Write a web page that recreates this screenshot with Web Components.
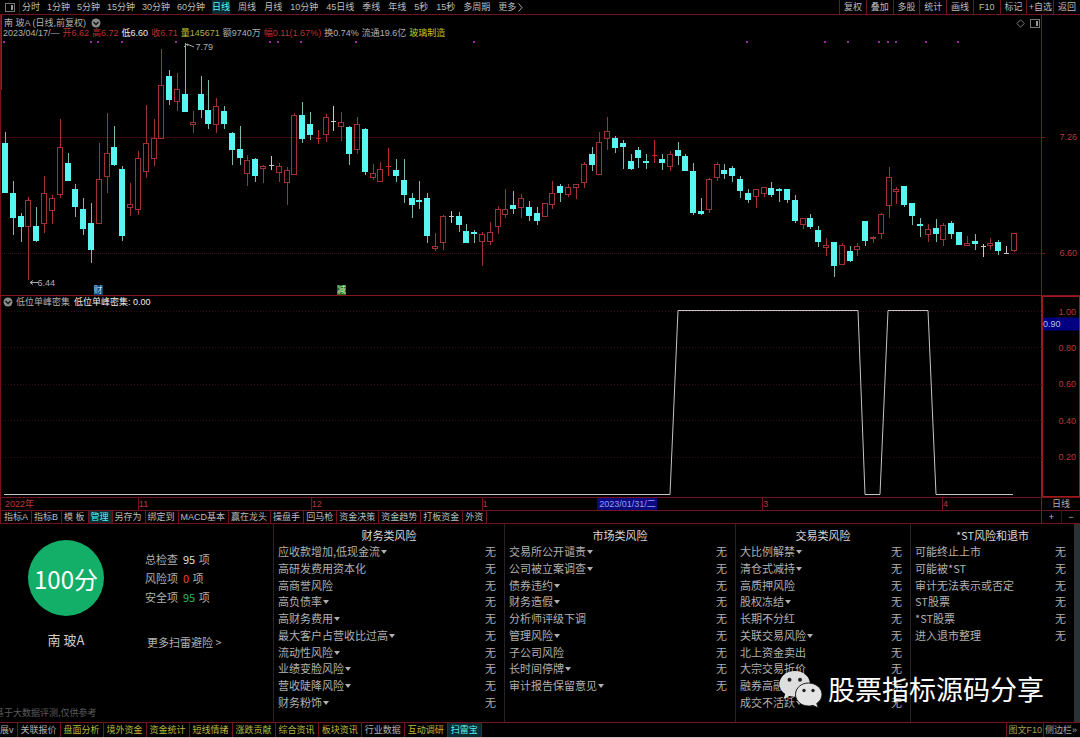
<!DOCTYPE html>
<html lang="zh-CN">
<head>
<meta charset="utf-8">
<title>南玻A 日线</title>
<style>
:root {
  --line: #74141a;
  --line-dim: #4a0c10;
  --red: #b8383c;
  --grey: #b0b0b0;
  --cyan: #58f6f0;
  --yellow: #b9bb3c;
  --font-ui: "Liberation Sans", "Noto Sans CJK SC", sans-serif;
  --font-panel: "Noto Sans CJK SC", sans-serif;
  --font-size-sm: 9px;
  --font-size-md: 11px;
  --axis-width: 39px;
}

body {
  margin: 0;
  background: #000;
  color: var(--grey);
  font-family: var(--font-ui);
  font-size: var(--font-size-sm);
  line-height: 10px;
}
</style>
</head>
<body>
<stock-terminal></stock-terminal>

<script>
// Shared base: every element clones its own template into an open root
class BaseElement extends HTMLElement {
  constructor() {
    super();
    this.attachShadow({ mode: 'open' });
  }
  render(css, html) {
    const template = document.createElement('template');
    template.innerHTML = `<style>
      * { box-sizing: border-box; }
      button, a { font: inherit; color: inherit; background: none; border: 0; margin: 0; padding: 0; text-decoration: none; cursor: pointer; white-space: nowrap; }
      svg { display: block; }
      ${css}
    </style>${html}`;
    this.shadowRoot.replaceChildren(template.content.cloneNode(true));
  }
}

const windowIcon = `<svg width="10" height="9" viewBox="0 0 10 9" fill="none" stroke="#777"><rect x=".5" y=".5" width="9" height="8"/><rect x="6" y="2" width="2" height="5" fill="#999" stroke="none"/></svg>`;
const foldIcon = `<svg width="10" height="10" viewBox="0 0 10 10"><circle cx="5" cy="5" r="4.5" fill="#8a8a8a"/><path d="M2.5 4 5 6.5 7.5 4" fill="none" stroke="#111" stroke-width="1.3"/></svg>`;

// Top toolbar: periods on the left, tools on the right
class PeriodBar extends BaseElement {
  connectedCallback() {
    const minutes = ['分时', '1分钟', '5分钟', '15分钟', '30分钟', '60分钟', '日线'];
    const periods = ['周线', '月线', '10分钟', '45日线', '季线', '年线', '5秒', '15秒', '多周期'];
    const tools = ['复权', '叠加', '多股', '统计', '画线', 'F10', '标记', '+自选', '返回'];
    const button = t => `<button${t === '日线' ? ' class="on"' : ''}>${t}</button>`;
    this.render(`
      :host { display: flex; height: 15px; border-bottom: 1px solid var(--line); color: #bcbcbc; }
      .icon { display: flex; align-items: center; width: 20px; padding-left: 5px; border-right: 1px solid var(--line-dim); margin-right: 2px; }
      .group { display: flex; gap: 7px; }
      .wide { gap: 8px; margin-left: 8px; flex: 1; }
      .on { color: var(--cyan); background: #0a2a33; }
      .more { display: flex; align-items: center; gap: 2px; }
      .tools { display: grid; grid-template-columns: repeat(9, 1fr); width: 241px; }
      .tools button { border-left: 1px solid var(--line); }
    `, `
      <button class="icon" aria-label="布局">${windowIcon}</button>
      <div class="group">${minutes.map(button).join('')}</div>
      <div class="group wide">${periods.map(button).join('')}
        <button class="more">更多<svg width="5" height="9" viewBox="0 0 5 9" fill="none" stroke="#aaa"><path d="M.5 .5 4 4.5 .5 8.5"/></svg></button>
      </div>
      <div class="tools">${tools.map(button).join('')}</div>
    `);
  }
}
customElements.define('period-bar', PeriodBar);

// [type, body top, body bottom, high, low], three units to a pixel.
// d = falling, u = rising, r / w = flat (red / white)
const BARS = [
  ['d',160,308,125,308],['d',309,385,272,435],['d',378,410,368,456],['u',330,410,322,570],['d',408,453,352,455],
  ['u',309,401,258,430],['u',325,364,315,402],['u',171,315,88,324],['d',219,272,188,272],['d',297,352,282,382],
  ['d',357,417,325,436],['d',399,479,340,520],['u',267,401,159,401],['u',189,262,70,309],['d',171,225,107,228],
  ['d',236,437,228,452],['u',341,353,280,377],['u',204,361,183,376],['u',160,247,46,263],['u',145,206,88,228],
  ['u',-15,146,-122,146],['d',-43,29,-60,45],['u',-3,35,-50,64],['d',12,65,-140,65],['u',97,105,63,129],
  ['d',12,61,-43,84],['d',60,102,-31,116],['u',49,104,23,128],['d',64,102,47,116],['d',129,181,125,225],
  ['d',176,205,108,225],['u',209,253,195,289],['d',208,257,204,277],['u',229,238,225,280],['w',226,226,197,241],
  ['u',229,248,218,277],['u',240,278,232,344],['u',76,254,68,254],['d',75,146,37,160],['d',101,134,65,149],
  ['r',143,143,120,163],['u',82,136,72,157],['w',93,93,47,124],['u',96,111,67,154],['d',111,193,108,224],
  ['u',102,179,80,192],['d',116,245,113,256],['u',248,263,223,270],['u',238,275,217,275],['r',228,228,174,257],
  ['d',239,258,208,277],['d',271,314,207,340],['d',323,346,309,384],['d',330,336,272,356],['d',323,437,309,458],
  ['u',468,476,428,482],['u',378,458,374,481],['w',379,379,362,399],['d',377,405,367,425],['d',424,458,403,458],
  ['d',426,432,419,458],['u',432,456,425,529],['u',426,456,397,465],['u',358,410,347,432],['u',358,374,298,383],
  ['d',345,356,304,372],['u',324,353,312,383],['d',351,377,334,393],['d',368,393,352,405],['u',340,380,340,380],
  ['u',310,344,273,356],['d',288,308,283,336],['u',292,315,281,322],['u',283,293,283,326],['u',223,278,216,293],
  ['d',192,224,172,244],['u',156,254,127,256],['u',124,147,80,180],['d',143,173,139,188],['d',159,172,150,236],
  ['d',212,236,193,241],['d',181,205,172,235],['d',212,219,193,238],['r',195,195,151,219],['d',208,219,193,241],
  ['u',192,230,184,243],['d',181,197,155,224],['d',197,242,193,243],['d',243,368,219,376],['d',362,372,324,374],
  ['u',267,359,263,368],['u',223,263,215,273],['d',240,252,223,268],['d',235,257,229,276],['d',267,304,258,324],
  ['d',308,330,297,340],['u',298,322,298,353],['u',292,311,292,320],['d',293,315,277,320],['d',297,303,293,336],
  ['d',297,329,297,339],['d',330,392,314,399],['u',384,406,384,418],['d',384,410,373,416],['d',420,457,409,471],
  ['u',464,474,443,499],['d',457,528,457,560],['u',464,524,459,524],['d',484,513,468,516],['u',468,481,460,499],
  ['d',393,452,393,467],['u',440,447,438,460],['u',373,433,370,447],['u',262,347,231,384],['u',297,305,290,341],
  ['d',288,345,288,350],['d',340,377,340,404],['d',402,409,384,441],['u',417,434,403,456],['d',414,431,388,457],
  ['u',404,449,398,468],['d',400,432,393,447],['d',426,464,426,464],['u',459,467,438,467],['d',452,463,431,479],
  ['w',469,469,463,500],['u',458,467,443,480],['d',457,483,451,494],['w',490,490,468,490],['u',430,483,428,487]
];
const EVENTS = [4, 91, 98, 122, 176, 270, 278, 301, 356, 474, 747, 825, 848, 879, 888, 896, 926, 958];

function drawBar([type, top, bottom, high, low], i) {
  const x = Math.round(5 + i * 7.82);
  const y = v => Math.round(v / 3) + 75;
  const rect = (rx, ry, w, h, fill) => `<rect x="${rx}" y="${ry}" width="${w}" height="${h}" fill="${fill}"/>`;
  const wick = { d: '#7fb8b0', u: '#a03236', r: '#c02a2a', w: '#c8c8c8' }[type];
  const t = y(top);
  const b = y(bottom);
  if (type === 'r' || type === 'w') {
    return rect(x, y(high), 1, y(low) - y(high), wick) + rect(x - 2, t, 5, 1, wick);
  }
  if (type === 'd') {
    return rect(x, y(high), 1, y(low) - y(high), wick) + rect(x - 3, t, 6, Math.max(2, b - t), '#58f6f0');
  }
  return rect(x, y(high), 1, Math.max(0, t - y(high)), wick) + rect(x, b, 1, Math.max(0, y(low) - b), wick) +
    `<rect x="${x - 2.5}" y="${t + 0.5}" width="5" height="${Math.max(1, b - t - 1)}" fill="none" stroke="${wick}"/>`;
}

const plotStyle = `
  .plot { position: relative; border-left: 1px solid var(--line); overflow: hidden; }
  .plot > svg { position: absolute; inset: 0; width: 100%; height: 100%; }
  .axis { position: relative; border-left: 1px solid #851519; color: var(--red); }
  .axis span { position: absolute; right: 3px; transform: translateY(-50%); }
  .axis span::before { content: ""; position: absolute; right: 32px; top: 5px; width: 3px; height: 1px; background: var(--line); }
  .head { position: relative; display: flex; align-items: center; gap: 3px; padding-left: 3px; }
`;

class KlineChart extends BaseElement {
  connectedCallback() {
    this.render(`
      :host { display: grid; grid-template-columns: 1fr var(--axis-width); border-bottom: 1px solid #851519; min-height: 0; }
      ${plotStyle}
      .title { padding-top: 3px; }
      .head h1 { font: inherit; margin: 0 2px 0 0; }
      .head button { display: block; }
      .tools { margin-left: auto; display: flex; gap: 5px; padding-right: 1px; }
      .quote { padding-left: 2px; white-space: nowrap; }
      .up { color: #b8302f; }
      .low { color: #eee; }
      .vol { color: #aaac5a; }
      .vol b, .trade { font-weight: normal; color: #c8c82a; }
      .mark { position: absolute; }
      .flag { position: absolute; top: 96.4%; width: 9px; height: 10px; }
      .cai { left: 8.9%; background: #12406e; color: #a8dcf8; }
      .jian { left: 32.3%; background: #1d6b1d; color: #d8f0c8; }
    `, `
      <div class="plot">
        <svg viewBox="1 0 1040 280" preserveAspectRatio="none">
          <path d="M2 122.5H1041" stroke="#3c0a0e"/>
          <path d="M2 238.5H1041" stroke="#3c1214" stroke-dasharray="1 1"/>
          ${EVENTS.map(x => `<rect x="${x - 1}" y="26" width="2" height="2" fill="#9a2aa4"/>`).join('')}
          ${BARS.map(drawBar).join('')}
          <path d="M184 32 187 29 188 31M187 29 194 32M30 267.500H38M33 265.500 30 267.500 33 269.500" fill="none" stroke="#aaa"/>
          <path d="M1.500 0V75" stroke="#a3181c"/>
        </svg>
        <div class="head title">
          <h1>南 玻A (日线,前复权)</h1>
          <button aria-label="展开">${foldIcon}</button>
          <div class="tools">
            <button aria-label="标记"><svg width="9" height="9" viewBox="0 0 9 9" fill="none" stroke="#777"><path d="M4.500 .8 8.200 4.500 4.500 8.200 .8 4.500Z"/></svg></button>
            <button aria-label="侧栏">${windowIcon}</button>
          </div>
        </div>
        <div class="head quote">
          <span>2023/04/17/—</span><span class="up">开6.62</span><span class="up">高6.72</span><span class="low">低6.60</span><span class="up">收6.71</span><span class="vol"><b>量</b>145671</span><span>额9740万</span><span class="up">幅0.11(1.67%)</span><span>换0.74%</span><span>流通19.6亿</span><span class="trade">玻璃制造</span>
        </div>
        <div class="mark" style="left: 18.7%; top: 9.6%">7.79</div>
        <div class="mark" style="left: 3.5%; top: 94%">6.44</div>
        <div class="flag cai">财</div>
        <div class="flag jian">减</div>
      </div>
      <div class="axis">
        <span style="top: 43.7%">7.26</span>
        <span style="top: 85.1%">6.60</span>
      </div>
    `);
  }
}
customElements.define('kline-chart', KlineChart);

class PeakChart extends BaseElement {
  connectedCallback() {
    const levels = [1, 0.8, 0.6, 0.4, 0.2];
    const y = v => 198 - v * 183;
    this.render(`
      :host { display: grid; grid-template-columns: 1fr var(--axis-width); border-bottom: 1px solid var(--line); min-height: 0; }
      ${plotStyle}
      .head { padding: 1px 0 0 2px; }
      .head b { font-weight: normal; color: #eee; margin-left: 1px; }
      .head button { display: block; }
      .axis { border: 1px solid #a3181c; border-width: 1px 1px 1px 2px; }
      .axis .now { left: 0; right: 0; height: 13px; line-height: 12px; background: #000080; color: #b9b9e8; }
      .axis .now::before { content: none; }
    `, `
      <div class="plot">
        <svg viewBox="1 0 1040 201" preserveAspectRatio="none">
          ${levels.map(v => `<path d="M2 ${Math.floor(y(v)) + 0.5}H1041" stroke="#3a0b0e" stroke-dasharray="1 2"/>`).join('')}
          <path d="M4 198.500H670L678 14.500H858L865 198.500H880L888 14.500H928L936 198.500H1013" fill="none" stroke="#c4c4c4"/>
        </svg>
        <div class="head"><button aria-label="展开">${foldIcon}</button><span>低位单峰密集</span><b>低位单峰密集: 0.00</b></div>
      </div>
      <div class="axis">
        ${levels.map(v => `<span style="top: ${(y(v) / 201 * 100).toFixed(1)}%">${v.toFixed(2)}</span>`).join('')}
        <span class="now" style="top: 13.700%">0.90</span>
      </div>
    `);
  }
}
customElements.define('peak-chart', PeakChart);

class TimeAxis extends BaseElement {
  connectedCallback() {
    this.render(`
      :host { display: flex; height: 13px; border-bottom: 1px solid var(--line); line-height: 12px; }
      .days { flex: 1; display: grid; grid-template-columns: 137fr 173fr 171fr 116fr 165fr 180fr 99fr; color: var(--red); border-left: 1px solid var(--line); }
      .days span { border-left: 1px solid var(--line); min-width: 0; white-space: nowrap; }
      .days span:first-child { border: 0; padding-left: 4px; }
      .days .cursor { border: 0; justify-self: start; width: 60px; background: #0a0a80; color: #9a9af0; text-align: center; }
      button { width: var(--axis-width); border-left: 1px solid #851519; }
    `, `
      <div class="days"><span>2022年</span><span>11</span><span>12</span><span>1</span><span class="cursor">2023/01/31/二</span><span>3</span><span>4</span></div>
      <button>日线</button>
    `);
  }
}
customElements.define('time-axis', TimeAxis);

// Row of slotted tabs, with an "end" slot at the right edge
class TabStrip extends BaseElement {
  connectedCallback() {
    this.render(`
      :host { display: flex; height: 13px; border-bottom: 1px solid var(--line); overflow: hidden; }
      ::slotted(button) { flex: none; }
      .end { margin-left: auto; display: flex; }
    `, `<slot></slot><div class="end"><slot name="end"></slot></div>`);
  }
}
customElements.define('tab-strip', TabStrip);

class ScoreCard extends BaseElement {
  connectedCallback() {
    this.render(`
      :host { display: grid; grid-template-columns: 132px 1fr; grid-template-rows: 1fr auto; column-gap: 13px; overflow: hidden; font-size: var(--font-size-md); line-height: 19px; }
      .score { display: flex; flex-direction: column; align-items: center; padding-top: 16px; }
      .disc { width: 76px; height: 76px; border-radius: 50%; background: #13ae67; color: #fff; font-size: 24px; display: flex; align-items: center; justify-content: center; }
      .name { margin: 14px 0 0; font-size: 13px; line-height: 20px; font-weight: normal; color: #ccc; }
      .counts { padding-top: 26px; }
      dl { margin: 0 0 26px; display: grid; grid-template-columns: 38px 1fr; }
      dt, dd { margin: 0; }
      b { font-weight: normal; color: #ddd; margin-right: 1px; }
      .bad { color: #f0442e; }
      .good { color: #2cb455; }
      .counts a { margin-left: 2px; }
      .note { grid-column: 1 / -1; margin: 0 0 3px -5px; font-size: var(--font-size-sm); line-height: 12px; color: #5c5c5c; }
    `, `
      <div class="score"><div class="disc">100分</div><h2 class="name">南 玻A</h2></div>
      <div class="counts">
        <dl>
          <dt>总检查</dt><dd><b>95</b> 项</dd>
          <dt>风险项</dt><dd><b class="bad">0</b> 项</dd>
          <dt>安全项</dt><dd><b class="good">95</b> 项</dd>
        </dl>
        <a href="#more">更多扫雷避险 &gt;</a>
      </div>
      <p class="note">基于大数据评测,仅供参考</p>
    `);
  }
}
customElements.define('score-card', ScoreCard);

// A trailing "+" on an item means that it can be unfolded
class RiskTable extends BaseElement {
  connectedCallback() {
    const rows = this.getAttribute('items').split('|').map(item => {
      const open = item.endsWith('+');
      const name = open ? item.slice(0, -1) : item;
      return `<tr><th scope="row">${open ? `<button>${name}<i></i></button>` : name}</th><td>无</td></tr>`;
    });
    this.render(`
      :host { display: block; border-left: 1px solid #2a2226; padding: 3px 8px 12px 4px; min-width: 0; font-size: var(--font-size-md); line-height: 16px; }
      table { display: flex; flex-direction: column; height: 100%; }
      caption { display: block; color: #d8d8d8; text-align: center; height: 16px; margin-right: -4px; }
      tbody { flex: 1; display: grid; grid-template-rows: repeat(10, 1fr); }
      tr { display: flex; justify-content: space-between; align-items: center; }
      th, td { padding: 0; font-weight: normal; white-space: nowrap; }
      i { display: inline-block; border: 3px solid transparent; border-top: 4px solid #b0b0b0; border-bottom: 0; margin: 0 0 2px 1px; }
    `, `<table><caption>${this.getAttribute('name')}</caption><tbody>${rows.join('')}</tbody></table>`);
  }
}
customElements.define('risk-table', RiskTable);

class ChannelMark extends BaseElement {
  connectedCallback() {
    this.render(`
      :host { display: flex; align-items: center; gap: 5px; color: #fff; font-size: 27px; line-height: 38px; white-space: nowrap; }
    `, `
      <svg width="44" height="38" viewBox="0 0 44 38">
        <path d="M16 1C7.200 1 .5 6.800 .5 14c0 4.200 2.200 7.700 5.700 10.100L4.500 29l6-3c1.800.5 3.600.8 5.500.8C24.800 26.800 31 21 31 14S24.800 1 16 1Z" fill="#dedede"/>
        <circle cx="10.500" cy="9.800" r="2" fill="#222"/><circle cx="21" cy="9.800" r="2" fill="#222"/>
        <path d="M29.500 13C22.200 13 16.500 18 16.500 24.500S22.200 36 29.500 36c1.500 0 3-.2 4.400-.6l5.300 2.400-1.400-4.400c3.200-2.100 5.200-5.300 5.200-8.900C43 18 36.800 13 29.500 13Z" fill="#e4e4e4" stroke="#1a1a1a"/>
        <circle cx="25" cy="20.500" r="1.700" fill="#222"/><circle cx="34" cy="20.500" r="1.700" fill="#222"/>
      </svg>
      <span>股票指标源码分享</span>
    `);
  }
}
customElements.define('channel-mark', ChannelMark);

class StockTerminal extends BaseElement {
  connectedCallback() {
    const tabs = ['指标A', '指标B', '模 板', '管理', '另存为', '绑定到', 'MACD基本', '赢在龙头', '操盘手', '回马枪', '资金决策', '资金趋势', '打板资金', '外资'];
    const pages = ['关联报价', '盘面分析', '境外资金', '资金统计', '短线情绪', '涨跌贡献', '综合资讯', '板块资讯', '行业数据', '互动调研', '扫雷宝'];
    const plain = ['关联报价', '行业数据'];
    const kind = t => t === '管理' || t === '扫雷宝' ? 'tab on' : plain.includes(t) || tabs.includes(t) ? 'tab' : 'tab hot';
    const button = t => `<button class="${kind(t)}">${t}</button>`;
    this.render(`
      :host { display: grid; grid-template-rows: auto minmax(0, 281fr) minmax(0, 202fr) auto auto minmax(0, 199fr) auto; height: 100vh; overflow: hidden; }
      .tab { border-right: 1px solid var(--line); padding: 0 3px 0 2px; }
      .on { color: var(--cyan); background: #0b2c34; }
      .hot { color: var(--yellow); }
      .tabs { padding-left: 1px; border-left: 1px solid var(--line); color: #bcbcbc; }
      .zoom { display: grid; grid-template-columns: 1fr 1fr; width: var(--axis-width); border-left: 1px solid #851519; }
      .zoom button + button { border-left: 1px solid var(--line-dim); }
      .risk { position: relative; display: grid; grid-template-columns: 273fr 231fr 231fr 175fr 164fr 6px; border-bottom: 1px solid var(--line); font-family: var(--font-panel); }
      .bar { background: #2a3236; }
      channel-mark { position: absolute; right: 36px; bottom: 14px; }
      .pages { height: 15px; border-bottom: 1px solid #d8b8b8; }
      .pages .tab { padding: 0 3px; }
      .pages .more { padding-left: 0; }
      .side { display: flex; align-items: center; color: #a9a9a9; }
      .side button { border-left: 1px solid var(--line); height: 100%; padding: 0 1px; }
      .side .f10 { color: #a0a04c; }
      .side button:last-child { padding-right: 3px; }
    `, `
      <period-bar></period-bar>
      <kline-chart></kline-chart>
      <peak-chart></peak-chart>
      <time-axis></time-axis>
      <tab-strip class="tabs">${tabs.map(button).join('')}
        <div slot="end" class="zoom"><button>+</button><button>−</button></div>
      </tab-strip>
      <section class="risk">
        <score-card></score-card>
        <risk-table name="财务类风险" items="应收款增加,低现金流+|高研发费用资本化|高商誉风险|高负债率+|高财务费用+|最大客户占营收比过高+|流动性风险+|业绩变脸风险+|营收陡降风险+|财务粉饰+"></risk-table>
        <risk-table name="市场类风险" items="交易所公开谴责+|公司被立案调查+|债券违约+|财务造假+|分析师评级下调|管理风险+|子公司风险|长时间停牌+|审计报告保留意见+"></risk-table>
        <risk-table name="交易类风险" items="大比例解禁+|清仓式减持+|高质押风险|股权冻结+|长期不分红|关联交易风险+|北上资金卖出|大宗交易折价|融券高融|成交不活跃+"></risk-table>
        <risk-table name="*ST风险和退市" items="可能终止上市|可能被*ST|审计无法表示或否定|ST股票|*ST股票|进入退市整理"></risk-table>
        <div class="bar"></div>
        <channel-mark></channel-mark>
      </section>
      <tab-strip class="pages"><button class="tab more">展v</button>${pages.map(button).join('')}
        <div slot="end" class="side"><button class="f10">图文F10</button><button>侧边栏»</button></div>
      </tab-strip>
    `);
  }
}
customElements.define('stock-terminal', StockTerminal);
</script>
</body>
</html>
